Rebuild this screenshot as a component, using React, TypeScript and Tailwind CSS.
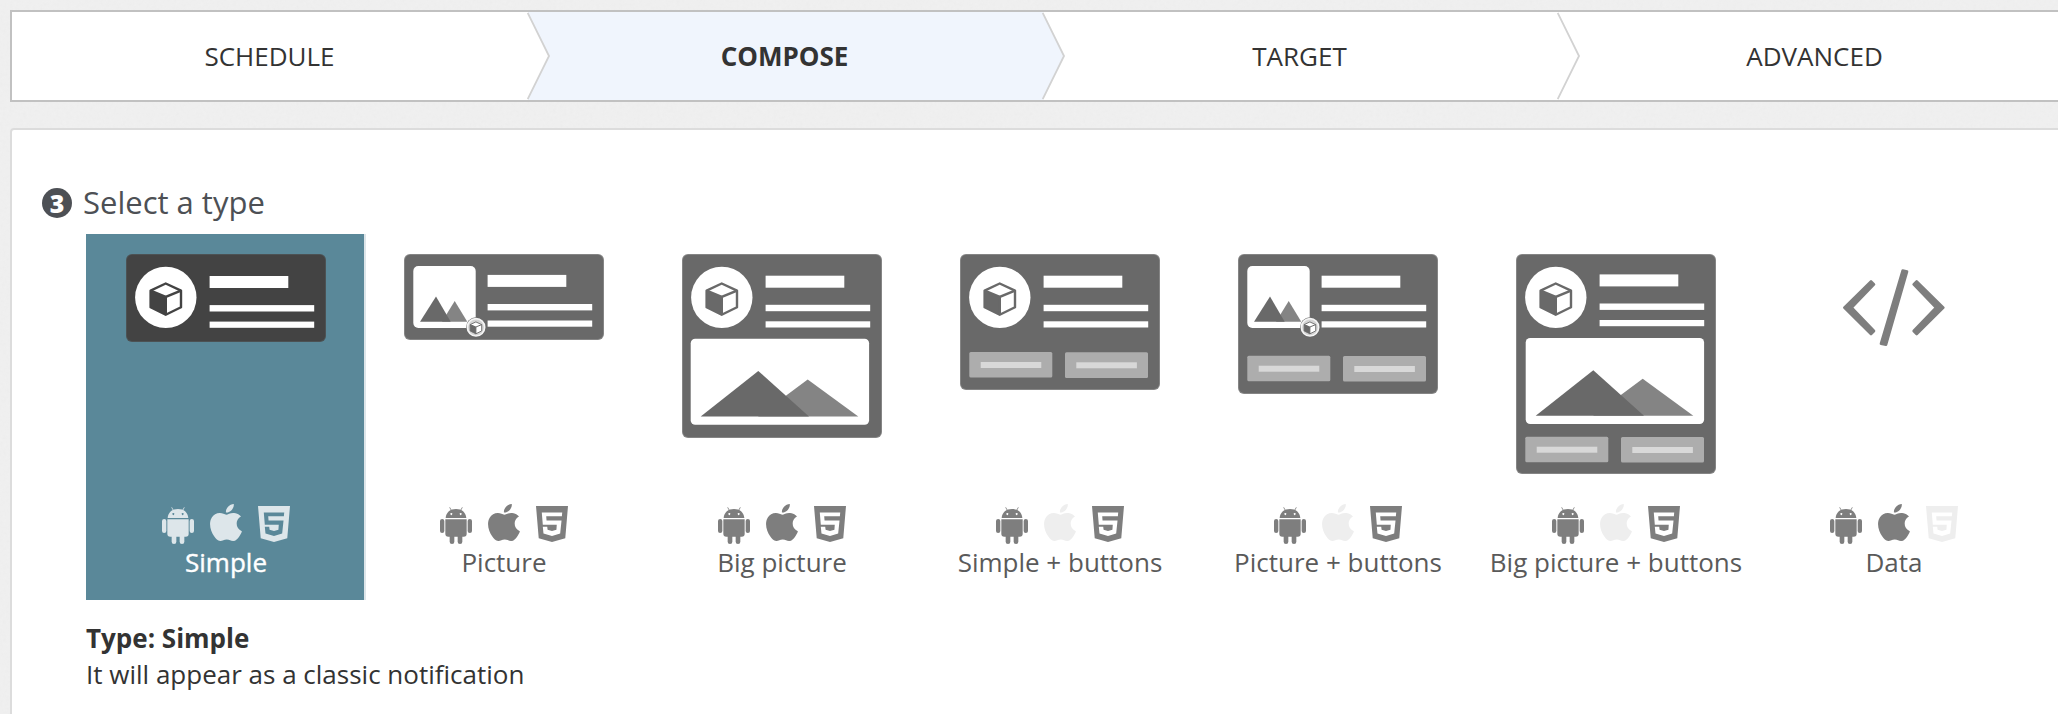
import clsx from "clsx";

const steps = ["SCHEDULE", "COMPOSE", "TARGET", "ADVANCED"];

type NotificationType = {
  label: string;
  height: number;
  icon?: boolean;
  picture?: boolean;
  big?: boolean;
  bigX?: number;
  bigY?: number;
  textY?: number;
  buttonsY?: number;
  code?: boolean;
  noApple?: boolean;
  noHtml?: boolean;
};

const types: NotificationType[] = [
  { label: "Simple", height: 88, icon: true, textY: 0.3 },
  { label: "Picture", height: 86, picture: true, textY: -0.8 },
  { label: "Big picture", height: 184, icon: true, bigX: 0, bigY: 0.7, big: true },
  { label: "Simple + buttons", height: 136, icon: true, buttonsY: 98, noApple: true },
  { label: "Picture + buttons", height: 140, picture: true, buttonsY: 101.7, noApple: true },
  { label: "Big picture + buttons", height: 220, icon: true, bigX: 1, bigY: 0, big: true, textY: -1.3, buttonsY: 182.7, noApple: true },
  { label: "Data", height: 220, code: true, noHtml: true },
];

function Cube({ color }: { color: string }) {
  return (
    <>
      <path d="M39.7 29.5 55 36.6V53.2L39.7 60.8 24.6 53.2V36.6Z" fill="#fff" stroke={color} strokeWidth="2.4" strokeLinejoin="round" />
      <path d="M24.6 36.6 39.7 42.9V60.8L24.6 53.2Z" fill={color} />
      <path d="M24.6 36.6 39.7 42.9 55 36.6M39.7 42.9V60.8" fill="none" stroke={color} strokeWidth="2.6" />
    </>
  );
}

function Thumb({ type, active }: { type: NotificationType; active: boolean }) {
  const color = active ? "#434343" : "#696969";
  const textY = type.textY ?? 0;

  return (
    <svg width="200" height={type.height} viewBox={`0 0 200 ${type.height}`}>
      <rect width="200" height={type.height} rx="6" fill={active ? "#4c5254" : "#858585"} />
      <rect x="1" y="1" width="198" height={type.height - 2} rx="5" fill={color} />

      {type.icon && (
        <>
          <circle cx="39.8" cy="43.4" r="30.7" fill="#fff" />
          <Cube color={color} />
        </>
      )}

      {type.picture && (
        <>
          <rect x="9.3" y="12" width="62.4" height="62" rx="5" fill="#fff" />
          <path d="M38 67.7 50.7 47 63.3 67.7Z" fill="#848484" />
          <path d="M16 67.7 32 42.5 46.7 67.7Z" fill={color} />
          <circle cx="72" cy="73.3" r="10" fill={color} />
          <circle cx="72" cy="73.3" r="8.7" fill="#d4d4d4" stroke="#f5f5f5" strokeWidth="1.6" />
          <g transform="translate(56.8 56.7) scale(0.38)">
            <Cube color={color} />
          </g>
        </>
      )}

      <g fill="#fff" transform={`translate(0 ${textY})`}>
        <rect x="83.6" y="21.7" width="78.7" height="12" />
        <rect x="83.6" y="50.8" width="104.6" height="6.4" />
        <rect x="83.6" y="67.3" width="104.6" height="6.2" />
      </g>

      {type.big && (
        <g transform={`translate(${type.bigX} ${type.bigY})`}>
          <rect x="8.7" y="84" width="178.4" height="86" rx="4.5" fill="#fff" />
          <path d="M76 161.7 125.7 124.7 176.3 161.7Z" fill="#848484" />
          <path d="M18.7 161.7 76.3 116.2 127 161.7Z" fill={color} />
        </g>
      )}

      {type.buttonsY && (
        <g transform={`translate(0 ${type.buttonsY})`}>
          <rect x="9.3" width="83" height="25.6" rx="1.5" fill="#adadad" />
          <rect x="20.7" y="10" width="60.6" height="6" fill="#d8d8d8" />
          <rect x="105" y="0.3" width="83" height="25.6" rx="1.5" fill="#adadad" />
          <rect x="116.3" y="10.3" width="60.6" height="6" fill="#d8d8d8" />
        </g>
      )}
    </svg>
  );
}

function CodeIcon() {
  return (
    <svg width="104" height="78" viewBox="66 57 312 234" className="mt-[15px] fill-[#7e7e7e] stroke-[#7e7e7e]" strokeWidth="8" strokeLinejoin="round">
      <path d="M153 94 162 103 95 173 162 243 153 252 73 173Z" />
      <path d="M290 94 281 103 348 173 281 243 290 252 370 173Z" />
      <path d="M248 62 261 65 198 284 183 281Z" />
    </svg>
  );
}

function AndroidIcon() {
  return (
    <svg width="32" height="37" viewBox="0 0 96 112" preserveAspectRatio="none" className="mt-[3px] fill-current">
      <rect y="36" width="13" height="43" rx="6.5" />
      <rect x="83" y="36" width="13" height="43" rx="6.5" />
      <rect x="29" y="76" width="14" height="36" rx="7" />
      <rect x="53" y="76" width="14" height="36" rx="7" />
      <path d="M16 37H80V81Q80 90 71 90H25Q16 90 16 81Z" />
      <path
        fillRule="evenodd"
        d="M17 33C18 16 31 6 48 6S78 16 79 33ZM34 18.5a2.8 2.8 0 1 0 .01 0ZM62 18.5a2.8 2.8 0 1 0 .01 0Z"
      />
      <path d="M29 1 35 12M67 1 61 12" stroke="currentColor" strokeWidth="2.5" />
    </svg>
  );
}

function AppleIcon() {
  return (
    <svg width="32" height="37" viewBox="2.2 0 19.6 24" preserveAspectRatio="none" className="fill-current">
      <path d="M12.152 6.896c-.948 0-2.415-1.078-3.96-1.04-2.04.027-3.91 1.183-4.961 3.014-2.117 3.675-.546 9.103 1.519 12.09 1.013 1.454 2.208 3.09 3.792 3.039 1.52-.065 2.09-.987 3.935-.987 1.831 0 2.35.987 3.96.948 1.637-.026 2.676-1.48 3.676-2.948 1.156-1.688 1.636-3.325 1.662-3.415-.039-.013-3.182-1.221-3.22-4.857-.026-3.04 2.48-4.494 2.597-4.559-1.429-2.09-3.623-2.324-4.39-2.376-2-.156-3.675 1.09-4.61 1.09zM15.53 3.83c.843-1.012 1.4-2.427 1.245-3.83-1.207.052-2.662.805-3.532 1.818-.78.896-1.454 2.338-1.273 3.714 1.338.104 2.715-.688 3.559-1.701" />
    </svg>
  );
}

function HtmlIcon() {
  return (
    <svg width="32" height="36" viewBox="0 0 94 109" preserveAspectRatio="none" className="mt-[2px] fill-current">
      <path
        fillRule="evenodd"
        d="M0 0H94L86 98 47 109 8 98ZM17 20 20 57H61L60 72 47 76 34 72 33 63H20L22 83 47 91 71 83 75 44H31L30 31H76L77 20Z"
      />
    </svg>
  );
}

function TypeCard({ type, active }: { type: NotificationType; active: boolean }) {
  return (
    <div
      className={clsx(
        "flex h-[366px] w-[278px] shrink-0 flex-col items-center pt-5 pl-0.5",
        active ? "bg-[#5a8899] text-white shadow-[2px_0_0_#dde5e9]" : "text-[#5a5a5a]"
      )}
    >
      <div className="flex h-[250px]">{type.code ? <CodeIcon /> : <Thumb type={type} active={active} />}</div>
      <div className={clsx("flex h-10 gap-4", active ? "text-[#dde6ea]" : "text-[#7e7e7e]")}>
        <AndroidIcon />
        <span className={clsx(type.noApple && "text-[#eeeeee]")}>
          <AppleIcon />
        </span>
        <span className={clsx(type.noHtml && "text-[#eeeeee]")}>
          <HtmlIcon />
        </span>
      </div>
      <div className={clsx("text-[26px] leading-9 whitespace-nowrap", active && "[-webkit-text-stroke:0.4px_white]")}>
        {type.label}
      </div>
    </div>
  );
}

// Faint paper grain behind the panels
function Grain() {
  return (
    <svg className="absolute inset-0 size-full opacity-[0.04]">
      <filter id="grain">
        <feTurbulence type="fractalNoise" baseFrequency="0.3" numOctaves="2" />
        <feColorMatrix type="saturate" values="0" />
      </filter>
      <rect width="100%" height="100%" filter="url(#grain)" />
    </svg>
  );
}

export default function App() {
  return (
    <div className="relative h-[714px] w-[2058px] overflow-hidden bg-[#f0f0f0] pt-2.5 pl-2.5 font-['Open_Sans','Noto_Sans',sans-serif] text-[#333]">
      <Grain />
      <nav className="relative flex h-[92px] w-[2066px] border-2 border-[#c1c1c1] bg-white">
        {steps.map((step, i) => (
          <div
            key={step}
            className={clsx(
              "relative flex w-[515px] shrink-0 items-center justify-center text-[26px]",
              step === "COMPOSE" && "bg-[#f0f5fd] font-bold"
            )}
          >
            {step}
            {i < 3 && (
              <svg width="24" height="88" viewBox="0 0 24 88" className="absolute top-0 left-full z-10">
                <path d="M0 0H.7L22 44 .7 88H0Z" fill={step === "COMPOSE" ? "#f0f5fd" : "#fff"} />
                <path d="M.7 1 22 44 .7 87" fill="none" stroke="#d2d2d2" strokeWidth="1.8" />
              </svg>
            )}
          </div>
        ))}
      </nav>

      <main className="relative mt-[26px] h-[600px] w-[2066px] rounded-[4px] border-2 border-[#dcdcdc] bg-white pt-[50px] pl-[30px]">
        <h2 className="flex h-[54px] items-center gap-[11px] pb-2 text-[31px] text-[#4d5055]">
          <span className="flex size-[30px] items-center justify-center rounded-full bg-[#4d5055] text-[25px] leading-none font-extrabold text-white">
            3
          </span>
          <span className="-mt-0.5">Select a type</span>
        </h2>
        <div className="ml-11 flex">
          {types.map((type, i) => (
            <TypeCard key={type.label} type={type} active={i === 0} />
          ))}
        </div>
        <div className="mt-5 ml-11 text-[26px] leading-9">
          <p className="font-bold">Type: Simple</p>
          <p>It will appear as a classic notification</p>
        </div>
      </main>
    </div>
  );
}
